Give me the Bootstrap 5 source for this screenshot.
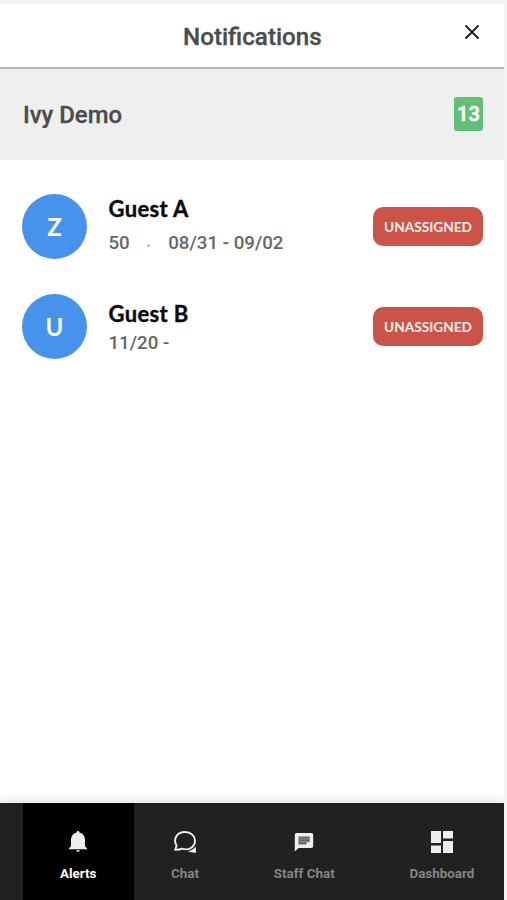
<!DOCTYPE html>
<html lang="en">
<head>
<meta charset="utf-8">
<meta name="viewport" content="width=device-width, initial-scale=1">
<title>Notifications</title>
<link href="https://cdn.jsdelivr.net/npm/bootstrap@5.3.0/dist/css/bootstrap.min.css" rel="stylesheet">
<style>
body{font-family:Roboto,sans-serif;background:#f3f3f3;color:#4c4c4c}
.app-shell{width:504px;height:896px;margin-top:4px}
.top-bar{height:65px;border-bottom:2px solid #b3b3b3;padding:0 21px 0 0}
.bar-title{font-size:24.2px;line-height:28px;font-weight:500;-webkit-text-stroke:.3px;margin-left:183px;padding-top:2px}
.close-btn{line-height:0;margin-bottom:7px;color:#17191c}
.property-row{height:91px;background:#efefef;padding:0 21px 0 23px}
.property-name{font-size:23.9px;line-height:28px;font-weight:500;-webkit-text-stroke:.3px}
.count-box{width:29px;height:34px;border-radius:3px;background:#62bf78;font-size:20px;line-height:34px;font-weight:600;-webkit-text-stroke:.4px;margin-top:-1px}
.guest-list{padding:33px 21px 0 22px;gap:34px}
.guest-row{height:66px}
.avatar{width:65px;height:65px;background:#4793ec;font:700 24px/66px Lato,sans-serif;margin-right:21.5px}
.guest-name{font:700 22px/26px Lato,sans-serif;letter-spacing:.35px;color:#0b0b0b;-webkit-text-stroke:.4px}
.name-raised{margin-top:-2px}
.guest-meta{font-size:18.7px;line-height:22px;font-weight:500;color:#666}
.meta-spaced{padding-top:10px}
.dot-sep{width:3px;height:3px;background:#b5b5b5;margin:5px 18px 0 17.5px}
.name-stacked{margin-top:-2px;padding-bottom:1px}
.state-btn{width:110px;height:39px;margin-top:1px;border-radius:10px;background:#cb5347;color:#fff0ec;font:700 13.7px/38px Lato,sans-serif}
.bottom-nav{height:97px;background:#212121;padding-left:22.5px;box-shadow:0 -2px 10px #0002}
.tab-link{padding:26px 37.4px 0;color:#858585;font-size:13.4px;font-weight:700;line-height:18px;white-space:nowrap;text-decoration:none}
.tab-link svg{display:block;color:#eee;margin-bottom:10px}
.tab-link.current{background:#000;color:#fff}
</style>
</head>
<body class="overflow-hidden">
<main class="app-shell d-flex flex-column bg-white overflow-hidden">
<header class="top-bar d-flex align-items-center justify-content-between">
<h1 class="bar-title mb-0">Notifications</h1>
<button class="close-btn btn p-0 border-0" aria-label="Close"><svg width="22" height="22" viewBox="0 0 22 22" fill="none" stroke="currentColor" stroke-width="1.8"><path d="M4.5 4.5 17.5 17.5M17.5 4.5 4.5 17.5"/></svg></button>
</header>
<section class="property-row d-flex align-items-center justify-content-between">
<h2 class="property-name mb-0">Ivy Demo</h2>
<span class="count-box text-white text-center">13</span>
</section>
<section class="guest-list flex-grow-1 d-flex flex-column">
<article class="guest-row d-flex align-items-center">
<div class="avatar rounded-circle text-white text-center flex-shrink-0">Z</div>
<div class="flex-grow-1"><div class="guest-name name-raised">Guest A</div><div class="guest-meta meta-spaced d-flex align-items-center"><span>50</span><span class="dot-sep rounded-circle"></span><span>08/31 - 09/02</span></div></div>
<button class="state-btn btn border-0 p-0">UNASSIGNED</button>
</article>
<article class="guest-row d-flex align-items-center">
<div class="avatar rounded-circle text-white text-center flex-shrink-0">U</div>
<div class="flex-grow-1 pt-1"><div class="guest-name name-stacked">Guest B</div><div class="guest-meta pt-1">11/20 -</div></div>
<button class="state-btn btn border-0 p-0">UNASSIGNED</button>
</article>
</section>
<nav class="bottom-nav d-flex flex-shrink-0">
<a href="#" class="tab-link current d-flex flex-column align-items-center"><svg width="26" height="26" viewBox="0 0 26 26" fill="currentColor"><path d="M11.6 3.4C11.6 1.6 14.4 1.6 14.4 3.4C18 4.4 20 7.2 20 11V17.2L22 19.2V20.2H4V19.2L6 17.2V11C6 7.2 8 4.4 11.6 3.4ZM11.2 21.3H14.8C14.6 23.4 11.4 23.4 11.2 21.3Z"/></svg>Alerts</a>
<a href="#" class="tab-link d-flex flex-column align-items-center"><svg width="26" height="26" viewBox="0 0 26 26"><path d="M3.2 20.8 4.6 16.7C0.6 9.6 5.2 3 13 3C19 3 23 7 23 11.8C23 18 16.5 22 10 19.7Q7.6 20.9 3.2 20.8Z" fill="none" stroke="currentColor" stroke-width="1.9" stroke-linejoin="round"/><path d="M15.8 22.2Q21 21 23.6 17.4L24.2 23.6Q19 24 15.8 22.2Z" fill="currentColor"/></svg>Chat</a>
<a href="#" class="tab-link d-flex flex-column align-items-center"><svg width="26" height="26" viewBox="0 0 26 26"><path d="M5.5 4H20.5Q22.2 4 22.2 5.7V17.3Q22.2 19 20.5 19H7.5L3.8 22.4V5.7Q3.8 4 5.5 4Z" fill="currentColor"/><path d="M7.5 7.5H18.7V12.9H15.5V15.6H7.5Z" fill="#666"/><path d="M7.5 9.9H18.7M7.5 12.9H18.7" stroke="#999" stroke-width=".8"/></svg>Staff Chat</a>
<a href="#" class="tab-link d-flex flex-column align-items-center"><svg width="26" height="26" viewBox="0 0 26 26" fill="currentColor"><path d="M2 2H12V14H2ZM14 2H24V9.5H14ZM2 16.5H12V24H2ZM14 12H24V24H14Z"/></svg>Dashboard</a>
</nav>
</main>
<script src="https://cdn.jsdelivr.net/npm/bootstrap@5.3.0/dist/js/bootstrap.bundle.min.js"></script>
</body>
</html>
